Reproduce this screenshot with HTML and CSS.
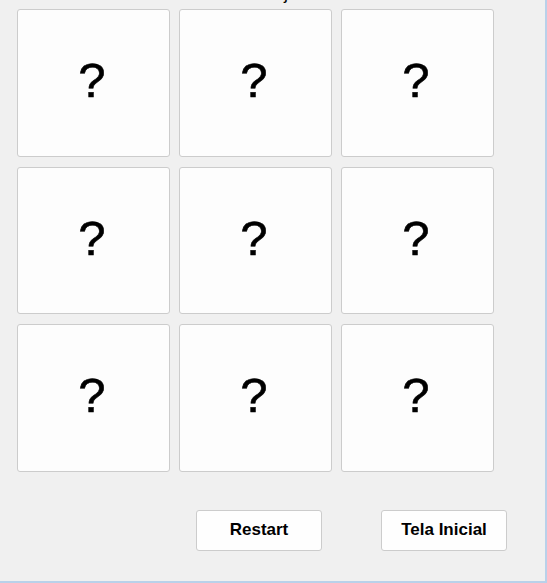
FILE: index.html
```html
<!DOCTYPE html>
<html lang="pt">
<head>
<meta charset="utf-8">
<title>Jogo</title>
<link rel="stylesheet" href="styles.css">
</head>
<body>
<div class="frame">
  <div class="content">
    <div class="title">Acerte e veja</div>
    <div class="board">
      <button class="cell">?</button>
      <button class="cell">?</button>
      <button class="cell">?</button>
      <button class="cell">?</button>
      <button class="cell">?</button>
      <button class="cell">?</button>
      <button class="cell">?</button>
      <button class="cell">?</button>
      <button class="cell">?</button>
    </div>
    <div class="actions">
      <button class="btn">Restart</button>
      <button class="btn">Tela Inicial</button>
    </div>
  </div>
</div>
</body>
</html>
```
FILE: styles.css
```css
html, body {
  margin: 0;
  padding: 0;
  background: #f0f0f0;
}
.frame {
  width: 545px;
  height: 581px;
  border-right: 2px solid #b9d1ea;
  border-bottom: 2px solid #b9d1ea;
  overflow: hidden;
  background: #f0f0f0;
  font-family: "Liberation Sans", Arial, sans-serif;
}
.content {
  padding-left: 17px;
}
.title {
  margin-top: -18px;
  height: 22px;
  line-height: 22px;
  font-size: 18px;
  padding-left: 176px;
  color: #000;
  white-space: nowrap;
}
.board {
  margin-top: 5px;
  display: grid;
  grid-template-columns: repeat(3, 153px);
  grid-template-rows: repeat(3, 147.5px);
  column-gap: 9px;
  row-gap: 10px;
}
.cell {
  box-sizing: border-box;
  margin: 0;
  padding: 0 3px 4px 0;
  border: 1px solid #cccccc;
  border-radius: 3px;
  background: #fdfdfd;
  font-family: "Liberation Sans", Arial, sans-serif;
  font-size: 49px;
  line-height: 1;
  color: #000;
  -webkit-text-stroke: 0.6px #000;
  display: flex;
  align-items: center;
  justify-content: center;
}
.actions {
  margin-top: 38px;
  padding-left: 179px;
  display: flex;
  gap: 59px;
}
.btn {
  box-sizing: border-box;
  width: 126px;
  height: 41px;
  margin: 0;
  padding: 0;
  border: 1px solid #cccccc;
  border-radius: 3px;
  background: #fefefe;
  font-family: "Liberation Sans", Arial, sans-serif;
  font-weight: bold;
  font-size: 17px;
  color: #000;
}
```
